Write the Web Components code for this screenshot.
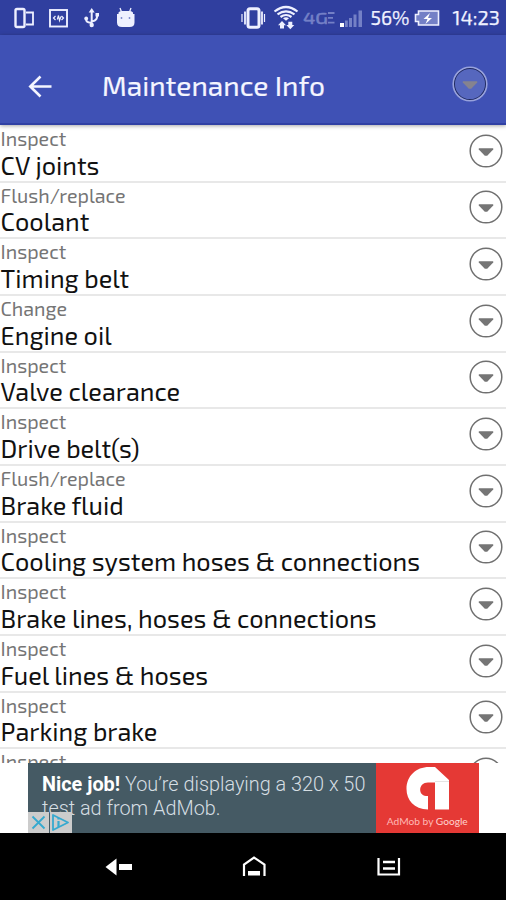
<!DOCTYPE html>
<html lang="en">
<head>
<meta charset="utf-8">
<title>Maintenance Info</title>
<style>
html,body{margin:0;padding:0}
body{font-family:"Exo 2","Noto Sans","Open Sans",sans-serif;background:#fff;width:506px;height:900px;overflow:hidden;font-variant-ligatures:none}
</style>
</head>
<body>
<phone-screen></phone-screen>
<script>
const define = (name, html, setup) => {
  const t = document.createElement('template');
  t.innerHTML = html;
  customElements.define(name, class extends HTMLElement {
    connectedCallback() {
      if (this.shadowRoot) return;
      this.attachShadow({mode: 'open'}).append(t.content.cloneNode(true));
      if (setup) setup(this, this.shadowRoot);
    }
  });
};

define('drop-button', `<style>:host{display:block;width:34px;height:34px;white-space:normal}svg{display:block}
.ring{fill:var(--fill,#fff);stroke:var(--ring,#707070);stroke-width:1.5}.tri{fill:var(--tri,#757575)}.halo{fill:none;stroke:var(--halo,none);stroke-width:1.6}</style>
<svg width="34" height="34" viewBox="0 0 34 34" overflow="visible"><circle class="ring" cx="17" cy="17" r="15.8"/><circle class="halo" cx="17" cy="17" r="16.800"/><path class="tri" d="M9.800 14.200h14.400v1.300l-6 6.200h-2.400l-6-6.200z"/></svg>`);

define('status-bar', `<style>
:host{display:flex;height:35px;background:#303f9f;color:#eef0ff;box-sizing:border-box;font-size:19.5px;line-height:36px}
svg{display:block;flex:none}
span{flex:none;-webkit-text-stroke:.25px}
.pct{margin-left:6.5px;width:40px}.time{margin-left:10px;width:50px;font-size:20px;line-height:35px}
</style>
<svg width="364" height="35" fill="none" stroke="#eef0ff" stroke-width="2">
<rect x="15.500" y="9" width="9" height="18" rx="1.5" stroke-width="2.400"/><path d="M26 12.500h7v12h-7" stroke-width="1.800"/>
<rect x="50" y="10" width="17" height="16.500" stroke-width="1.900"/><path d="M55.500 16l-2 2 2 2M61.500 16l2 2-2 2M57.300 19.500l1.200-4 1 5 1.500-4" stroke-width="1.200"/>
<path d="M91.700 11v15M91.700 23c-6-1-5.500-2-5.500-5M91.700 21.500c5-1 5.500-3 5.500-7" stroke-width="2"/><path d="M91.700 8l3 4.500h-6z" fill="#eef0ff" stroke="none"/><circle cx="86.200" cy="18.500" r="1.900" fill="#eef0ff" stroke="none"/><rect x="95.500" y="13" width="3.500" height="3.500" fill="#eef0ff" stroke="none"/><circle cx="91.700" cy="25" r="2.200" fill="#eef0ff" stroke="none"/>
<path d="M118.500 12.500q1-1.500 3-1.500h8.500q2 0 3 1.500v1.500h1.500v8.500q0 4.500-5 4.500h-7.500q-5 0-5-4.500v-8.500h1.500z" fill="#eef0ff" stroke="none"/><path d="M121.500 12l-1.500-4M129.500 12l1.500-4" stroke-width="1.300"/><circle cx="121.500" cy="18" r=".9" fill="#7886cc" stroke="none"/><circle cx="129.500" cy="18" r=".9" fill="#7886cc" stroke="none"/>
<rect x="248" y="8.800" width="11" height="18.400" rx="2" stroke-width="3"/><path d="M245 11.500v13M262 11.500v13" stroke-width="1.800"/><path d="M242 14v8M264.500 14v8" stroke-width="1.200"/>
<path d="M274.500 11.500q11.500-9 23 0M277.500 14.300q8.500-6 17 0M280.500 17q5.500-4 11 0" stroke-width="2.200"/><path d="M283 18.200q3-2 6 0l-3 2.600z" fill="#eef0ff" stroke="none"/>
<path d="M278 25.200l4-4.200 4 4.200h-2v3.300h-4v-3.300zM286.300 25l4 4.200 4-4.200h-2v-3.300h-4v3.300z" fill="#eef0ff" stroke="none"/>
<g fill="#7480c6" stroke="none"><rect x="345" y="20.500" width="2.800" height="6.500"/><rect x="349" y="18" width="3" height="9"/><rect x="353.500" y="14.500" width="3" height="12.500"/><rect x="358.500" y="10.500" width="3.500" height="16.500"/></g><rect x="340" y="23" width="4" height="4" fill="#fff" stroke="none"/>
<text x="303" y="23.500" textLength="25" lengthAdjust="spacingAndGlyphs" font-size="15.500" fill="#7480c6" stroke="#7480c6" stroke-width=".5">4G</text>
<path d="M328 13h6.500M328 17.800h5M328 22.700h6.500" stroke="#7480c6" stroke-width="1.800"/>
</svg>
<span class="pct">56%</span>
<svg width="32" height="35"><path d="M7.500 11h20v14h-20v-3.500h-3v-7h3z" fill="#7480c6" stroke="#eef0ff" stroke-width="1.600"/><path d="M19 13l-6.500 6h4l-2 5 6.500-6h-4z" fill="#fff"/></svg>
<span class="time">14:23</span>`);

define('app-header', `<style>
:host{display:flex;height:90px;box-sizing:border-box;background:#3f51b5;border-bottom:2px solid #3040a4;box-shadow:0 1px 4px rgba(0,0,0,.35);padding:0 19px 0 28px;position:relative;color:#f4f5ff;z-index:1}
svg{display:block;margin-top:39px}
.title{margin-left:48px;font-size:28.2px;line-height:40px;margin-top:30px;flex:1;white-space:pre;-webkit-text-stroke:.2px}
drop-button{margin-top:32px;--fill:#5667be;--ring:#1f2960;--tri:#85838f;--halo:#98a2dc}
</style>
<svg width="26" height="26" fill="none" stroke="#f4f5ff" stroke-width="2.600"><path d="M23.500 12.500H2.500M12.500 2.500L2.300 12.500 12.500 22.500"/></svg>
<div class="title"><slot></slot></div>
<drop-button></drop-button>`);

define('maintenance-row', `<style>
:host{display:flex;flex:none;height:56.67px;box-sizing:border-box;border-bottom:2px solid #e8e8e8;padding:0 3.5px 0 .6px;justify-content:space-between;white-space:pre}
.label{font-size:19.7px;line-height:24.600px;color:#757575}
.name{font-size:25.25px;line-height:29px;color:#111}
drop-button{margin-top:7.800px}
</style><div class="texts"><div class="label"><slot name="label"></slot></div><div class="name"><slot></slot></div></div><drop-button></drop-button>`);

define('ad-banner', `<style>
:host{display:flex;width:450.5px;height:70px;background:#455a64;font-family:Roboto,sans-serif;color:#d5dee3;position:relative}
.copy{flex:1;padding:10px 0 0 14px;font-size:19.85px;line-height:23.5px;font-weight:300;white-space:pre}
b{color:#fff;font-weight:700}
.logo{width:102.500px;background:#e53935;display:flex;flex-direction:column;align-items:center}
.logo svg{display:block}
.by{font:400 10.2px/16px Lato,sans-serif;color:#ffb9b5}
.by b{font-weight:400;color:#ffd3d0}
.choices{position:absolute;left:0;bottom:0;display:flex;gap:1px}
.choices svg{background:#ccc;display:block}
</style>
<div class="copy"><div><b>Nice job!</b> You’re displaying a 320 x 50</div><div>test ad from AdMob.</div></div>
<div class="logo"><svg width="102" height="50"><path d="M52 46.500C38 46 30.500 37 30.500 26 30.500 13 40 4 53 4h6l14 13v29.500H59V19.500h-7c-10 0-10 13-2 13.500h2z" fill="#fff"/><path d="M59 18.500h14" stroke="#e4e4e4"/></svg><div class="by">AdMob by <b>Google</b></div></div>
<div class="choices"><svg width="21" height="21" fill="none" stroke="#36a9cf" stroke-width="1.800"><path d="M4.500 4.500l12 12M16.500 4.500l-12 12"/></svg><svg width="22" height="21" fill="none" stroke="#36a9cf" stroke-width="1.800"><path d="M3 3.500v14.500l3.500-1.800L18 10.500 3 3z" stroke-linejoin="round"/><path d="M8.500 9v6M8.500 6v1.500" stroke-width="2.200"/></svg></div>`);

define('nav-bar', `<style>:host{display:block;height:67px;background:#000}svg{display:block}</style>
<svg width="506" height="67" fill="none" stroke="#fff" stroke-width="2.200"><path d="M105.500 34l11-8.500v17z" fill="#fff" stroke="none"/><rect x="119" y="31" width="13" height="6" fill="#fff" stroke="none"/>
<path d="M244 43V31.500l10-7 10.500 7V43"/><rect x="248" y="38" width="12" height="4.500" fill="#fff" stroke="none"/>
<path d="M378.500 25v16.500h20.500V25"/><path d="M383 29h12M383 35.500h12" stroke-width="2.500"/></svg>`);

define('phone-screen', `<style>
:host{display:flex;flex-direction:column;width:506px;height:900px;background:#fff;overflow:hidden}
status-bar,app-header,nav-bar{flex:none}
.content{display:grid;flex:1;min-height:0;grid-template-rows:638px 70px}
.list{display:flex;flex-direction:column;overflow:hidden;padding-top:1px;box-sizing:border-box}
ad-banner{margin-left:28px}
</style>
<status-bar></status-bar><app-header>Maintenance Info</app-header>
<div class="content"><div class="list"></div><ad-banner></ad-banner></div><nav-bar></nav-bar>`, (host, root) => {
  const items = [
    ['Inspect', 'CV joints'], ['Flush/replace', 'Coolant'], ['Inspect', 'Timing belt'],
    ['Change', 'Engine oil'], ['Inspect', 'Valve clearance'], ['Inspect', 'Drive belt(s)'],
    ['Flush/replace', 'Brake fluid'], ['Inspect', 'Cooling system hoses & connections'],
    ['Inspect', 'Brake lines, hoses & connections'], ['Inspect', 'Fuel lines & hoses'],
    ['Inspect', 'Parking brake'], ['Inspect', '']
  ];
  const list = root.querySelector('.list');
  for (const [label, name] of items) {
    const row = document.createElement('maintenance-row');
    const tag = document.createElement('span');
    tag.slot = 'label';
    tag.textContent = label;
    row.append(tag, name);
    list.append(row);
  }
});
</script>
</body>
</html>
